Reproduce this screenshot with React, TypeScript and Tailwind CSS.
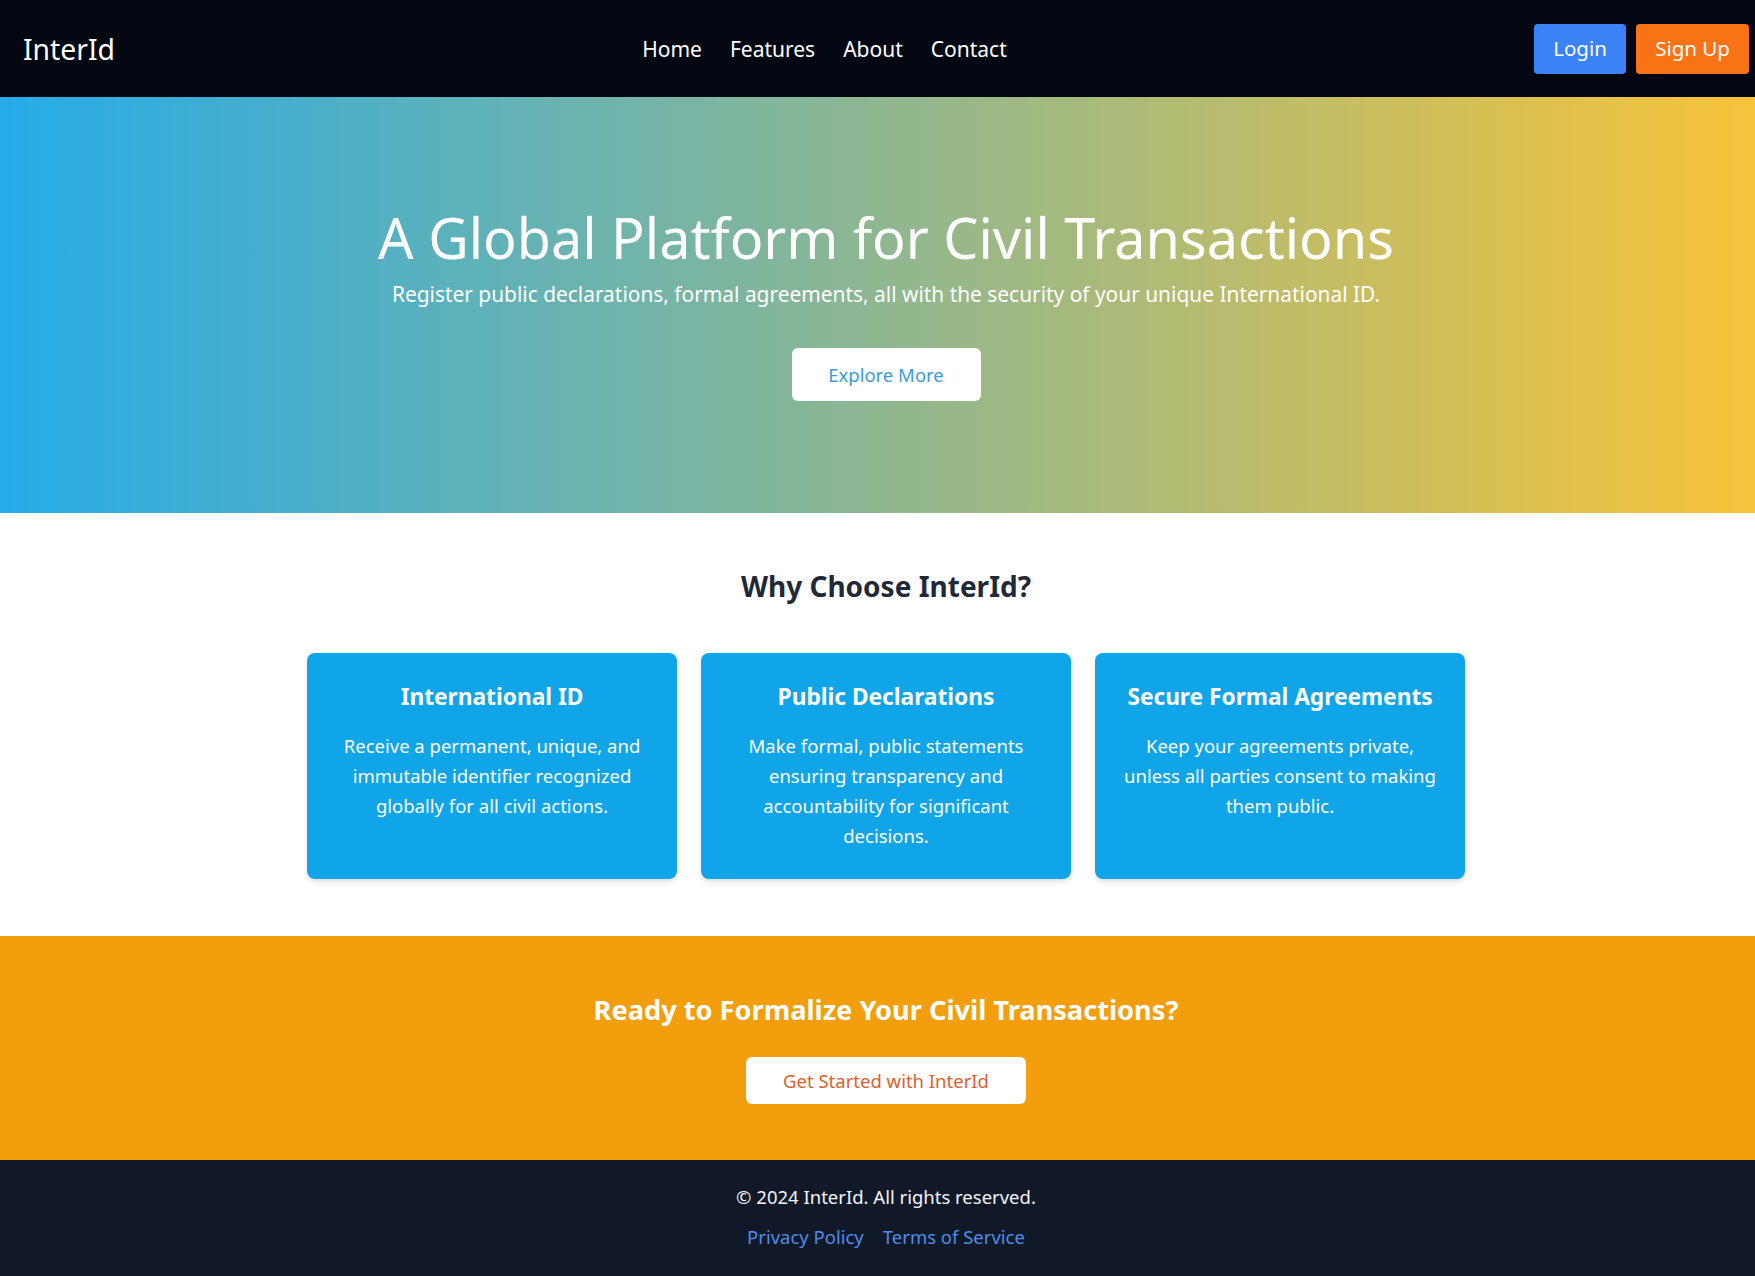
import React from "react";

const features = [
  {
    title: "International ID",
    text: "Receive a permanent, unique, and immutable identifier recognized globally for all civil actions.",
  },
  {
    title: "Public Declarations",
    text: "Make formal, public statements ensuring transparency and accountability for significant decisions.",
  },
  {
    title: "Secure Formal Agreements",
    text: "Keep your agreements private, unless all parties consent to making them public.",
  },
];

export default function App() {
  return (
    <div className="min-h-screen bg-white font-['Noto_Sans',sans-serif] text-white">
      <nav className="flex h-[97px] items-center justify-between bg-[#030712] pl-[23px] pr-[6px]">
        <div className="text-[28.3px] leading-9">InterId</div>
        <ul className="flex gap-7 text-[21px] leading-7">
          <li><a href="#">Home</a></li>
          <li><a href="#">Features</a></li>
          <li><a href="#">About</a></li>
          <li><a href="#">Contact</a></li>
        </ul>
        <div className="flex gap-[10px] text-[20.5px]">
          <button className="h-[50px] w-[92px] rounded bg-[#3b82f6] text-white">Login</button>
          <button className="h-[50px] w-[113px] rounded bg-[#f97316] text-white">Sign Up</button>
        </div>
      </nav>

      <section className="flex flex-col items-center bg-[linear-gradient(to_right,#26abe8,#f7c33a)] pt-[107px] pb-[112px] pl-[17px] text-center">
        <h1 className="text-[55.7px] leading-[66px]">A Global Platform for Civil Transactions</h1>
        <p className="mt-[10px] text-[20.9px] leading-7">
          Register public declarations, formal agreements, all with the security of your unique International ID.
        </p>
        <button className="mt-[40px] flex h-[53px] w-[189px] items-center justify-center rounded-md bg-white text-[18.5px] text-[#3a9bd9]">
          Explore More
        </button>
      </section>

      <section className="flex flex-col items-center pt-[55px] pb-[57px] pl-[17px]">
        <h2 className="text-[28px] font-bold leading-9 text-[#1f2937]">Why Choose InterId?</h2>
        <div className="mt-[49px] grid w-[1158px] grid-cols-3 gap-6">
          {features.map((f) => (
            <div
              key={f.title}
              className="rounded-lg bg-[#0fa5e8] px-[25px] pt-7 pb-7 text-center shadow-md"
            >
              <h3 className="text-[22.7px] font-bold leading-8">{f.title}</h3>
              <p className="mt-[18px] text-[18.5px] leading-[30px]">{f.text}</p>
            </div>
          ))}
        </div>
      </section>

      <section className="flex flex-col items-center bg-[#f39e0c] pt-14 pb-14 pl-[17px]">
        <h2 className="text-[27.2px] font-bold leading-9">Ready to Formalize Your Civil Transactions?</h2>
        <button className="mt-[29px] flex h-[47px] w-[280px] items-center justify-center rounded-md bg-white text-[18.5px] text-[#d9622f]">
          Get Started with InterId
        </button>
      </section>

      <footer className="flex flex-col items-center bg-[#111827] pt-[23px] pb-[25px] pl-[17px] text-[18.5px] leading-7">
        <p className="text-[#f3f4f6]">© 2024 InterId. All rights reserved.</p>
        <div className="mt-3 flex gap-[19px] text-[#4d8ee8]">
          <a href="#">Privacy Policy</a>
          <a href="#">Terms of Service</a>
        </div>
      </footer>
    </div>
  );
}
